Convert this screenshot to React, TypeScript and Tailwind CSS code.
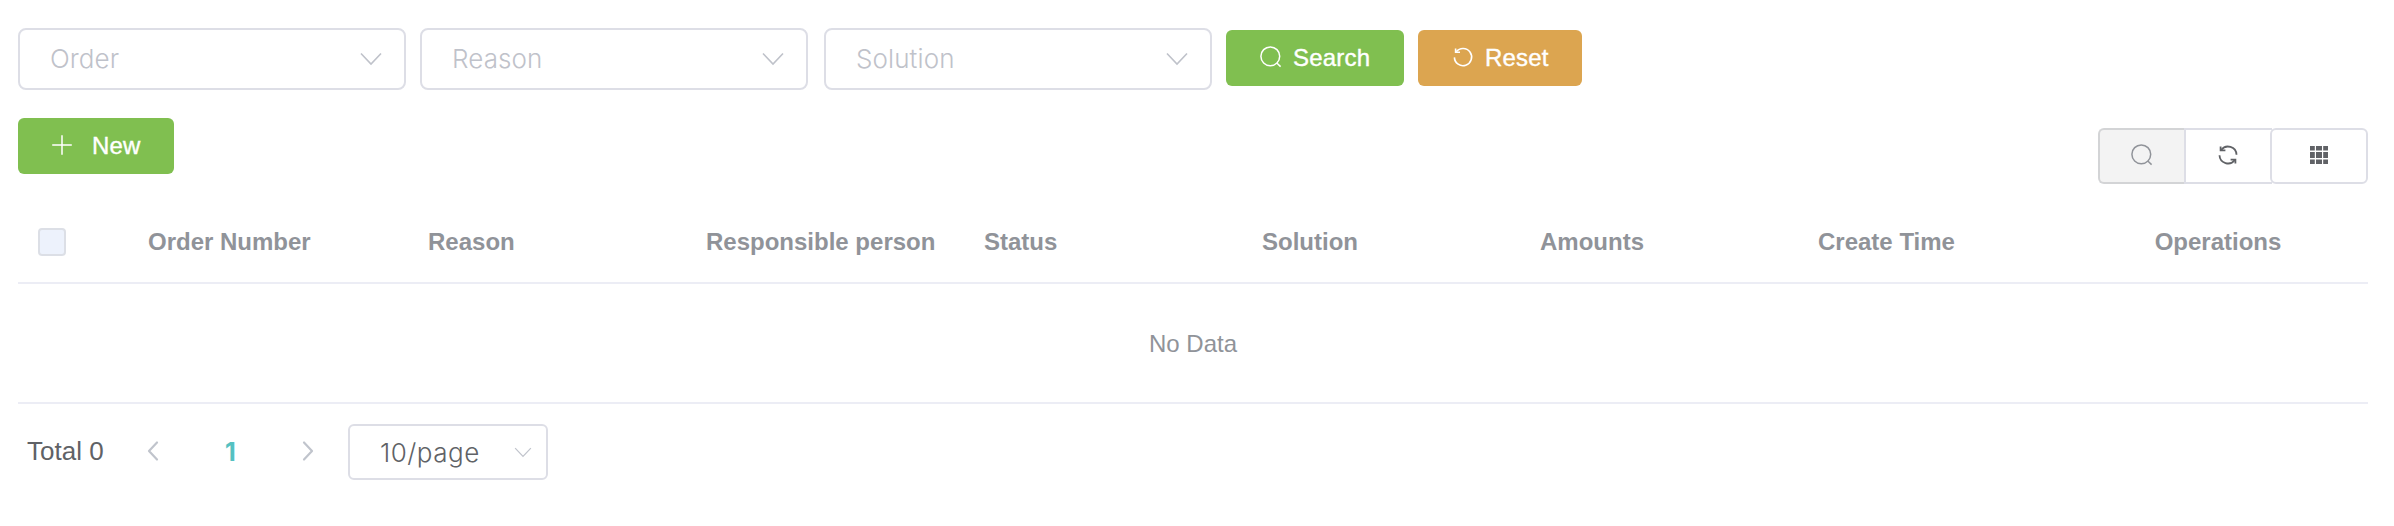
import React from "react";

const columns = ["Order Number", "Reason", "Responsible person", "Status", "Solution", "Amounts", "Create Time"];

function Chevron({ className }: { className: string }) {
  return (
    <svg viewBox="0 0 22 14" fill="none" stroke="currentColor" className={className}>
      <path d="M1 1.5 11 12 21 1.5" strokeWidth="1.6" />
    </svg>
  );
}

function SearchIcon({ className }: { className: string }) {
  return (
    <svg viewBox="0 0 24 24" fill="none" stroke="currentColor" strokeWidth="1.5" className={className}>
      <circle cx="11.3" cy="11.3" r="9.4" />
      <path d="M17.8 18 21.6 21.6" />
    </svg>
  );
}

function Select({ label, className }: { label: string; className: string }) {
  return (
    <div className={`flex h-[62px] w-[388px] items-center justify-between rounded-lg border-2 border-[#dddee6] pr-[22px] pl-[30px] text-[#bfc2ca] ${className}`}>
      <span className="font-['Inter'] text-[26px] leading-[58px] font-light tracking-[0.1px]">{label}</span>
      <Chevron className="h-[14px] w-[22px]" />
    </div>
  );
}

const buttonText = "text-2xl leading-[56px] tracking-[0.2px] [-webkit-text-stroke:0.4px_white]";

export default function App() {
  return (
    <div className="h-[526px] w-[2394px] bg-white px-[18px] pt-7 font-['Liberation_Sans',sans-serif] text-[#606266]">
      <div className="flex h-[62px] items-start">
        <Select label="Order" className="mr-[14px]" />
        <Select label="Reason" className="mr-4" />
        <Select label="Solution" className="mr-[14px]" />
        <button className="mt-[2px] mr-[14px] flex h-14 w-[178px] items-center rounded-md bg-[#80bf50] pl-[33px] text-white">
          <SearchIcon className="mr-[10px] mb-[2px] h-6 w-6" />
          <span className={buttonText}>Search</span>
        </button>
        <button className="mt-[2px] flex h-14 w-[164px] items-center rounded-md bg-[#dca550] pl-[33px] text-white">
          <svg viewBox="0 0 24 24" fill="none" stroke="currentColor" strokeWidth="1.6" className="mr-[10px] mb-[2px] h-6 w-6">
            <path d="M3.4 12.4A8.6 8.6 0 1 0 5.2 6.8" />
            <path d="M4.6 3.4V7.2H9" />
          </svg>
          <span className={buttonText}>Reset</span>
        </button>
      </div>

      <div className="flex items-start justify-between pt-7 pr-2">
        <button className="flex h-14 w-[156px] items-center rounded-md bg-[#80bf50] pl-8 text-white">
          <svg viewBox="0 0 24 24" fill="none" stroke="currentColor" strokeWidth="1.5" className="mr-[18px] mb-[2px] h-6 w-6">
            <path d="M12 2.2V21.8M2.2 12H21.8" />
          </svg>
          <span className={buttonText}>New</span>
        </button>
        <div className="mt-[10px] flex h-14">
          <button className="flex w-[86px] items-center justify-center rounded-l-md border-2 border-r-0 border-[#d3d4d6] bg-[#f3f3f3] pb-[2px] text-[#909399]">
            <SearchIcon className="h-6 w-6" />
          </button>
          <button className="flex w-[88px] items-center justify-center border-2 border-r-0 border-[#dddee6] pr-[3px] pb-[2px]">
            <svg viewBox="0 0 24 24" fill="none" stroke="currentColor" strokeWidth="1.8" className="h-6 w-6">
              <path d="M20.5 11.7A8.5 8.5 0 0 0 5.2 7M3.5 12.3A8.5 8.5 0 0 0 18.8 17" />
              <path d="M4.6 3.6V7.4H9.4M19.4 20.4V16.6H14.6" />
            </svg>
          </button>
          <button className="flex w-[98px] -ml-[2px] items-center justify-center rounded-md border-2 border-[#dddee6] bg-white pb-[2px]">
            <svg viewBox="0 0 18 18" fill="currentColor" className="h-[18px] w-[18px]">
              <path d="M0 0h4.8v4.5H0zM6 0h6v4.5H6zM13.2 0H18v4.5h-4.8zM0 6h4.8v6H0zM6 6h6v6H6zM13.2 6H18v6h-4.8zM0 13.5h4.8V18H0zM6 13.5h6V18H6zM13.2 13.5H18V18h-4.8z" />
            </svg>
          </button>
        </div>
      </div>

      <div className="mt-[18px] w-[2350px] text-2xl text-[#909399]">
        <div className="grid h-[82px] grid-cols-[110px_280px_278px_278px_278px_278px_278px_270px_300px] items-center border-b-2 border-[#ecedf5] font-bold">
          <div className="pl-5">
            <div className="h-7 w-7 rounded border-2 border-[#dcdfe6] bg-[#edf2fc]" />
          </div>
          {columns.map((column) => (
            <div key={column} className="pl-5 whitespace-nowrap">{column}</div>
          ))}
          <div className="text-center">Operations</div>
        </div>
        <div className="flex h-[120px] items-center justify-center border-b-2 border-[#ecedf5] pt-[2px]">No Data</div>
      </div>

      <div className="mt-5 flex h-14 items-center pl-[9px] text-[26px]">
        <span className="w-[119px] pb-[2px]">Total 0</span>
        <svg viewBox="0 0 14 22" fill="none" stroke="#c0c4cc" strokeWidth="2.2" strokeLinecap="round" strokeLinejoin="round" className="mb-[2px] h-[22px] w-[14px]">
          <path d="M11 2.5 3 11 11 19.5" />
        </svg>
        <span className="w-[141px] pt-[2px] text-center font-['Inter'] text-[25px] font-bold text-[#55c1c1]">1</span>
        <svg viewBox="0 0 14 22" fill="none" stroke="#c0c4cc" strokeWidth="2.2" strokeLinecap="round" strokeLinejoin="round" className="mb-[2px] h-[22px] w-[14px]">
          <path d="M3 2.5 11 11 3 19.5" />
        </svg>
        <div className="ml-[33px] flex h-14 w-[200px] items-center justify-between rounded-md border-2 border-[#dddee6] pr-[14px] pl-[30px]">
          <span className="font-['Inter'] font-light tracking-[0.5px]">10/page</span>
          <Chevron className="h-[11px] w-[18px] text-[#c0c4cc]" />
        </div>
      </div>
    </div>
  );
}
